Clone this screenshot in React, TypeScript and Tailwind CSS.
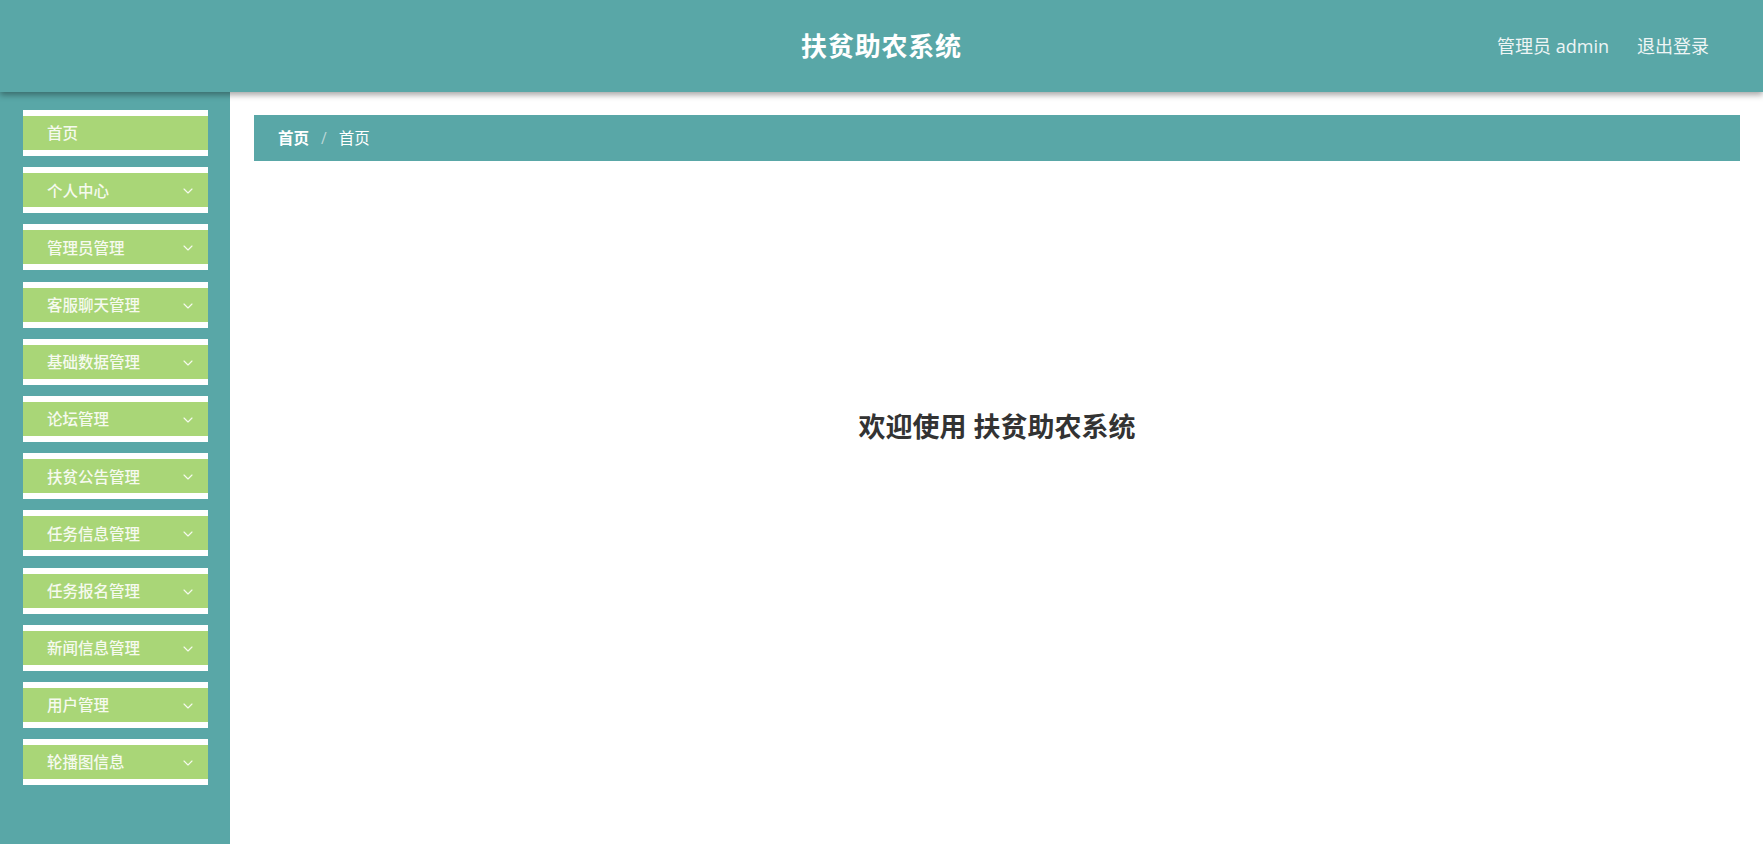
import { ChevronDown } from "lucide-react";

const menus = [
  { title: "首页", sub: false },
  { title: "个人中心", sub: true },
  { title: "管理员管理", sub: true },
  { title: "客服聊天管理", sub: true },
  { title: "基础数据管理", sub: true },
  { title: "论坛管理", sub: true },
  { title: "扶贫公告管理", sub: true },
  { title: "任务信息管理", sub: true },
  { title: "任务报名管理", sub: true },
  { title: "新闻信息管理", sub: true },
  { title: "用户管理", sub: true },
  { title: "轮播图信息", sub: true },
];

const font = { fontFamily: '"Open Sans", "Noto Sans CJK SC", sans-serif' };

export default function App() {
  return (
    <div className="min-h-screen flex flex-col bg-white" style={font}>
      <header className="relative z-10 h-[92px] bg-[#59a7a7] shadow-[0_3px_6px_rgba(0,0,0,0.35)] grid grid-cols-[1fr_auto_1fr] items-center">
        <div />
        <h1 className="text-[26px] font-bold text-white tracking-[0.8px]">扶贫助农系统</h1>
        <div className="flex justify-end items-center gap-[28px] pr-[54px] text-[18px] text-[#eef5f5]">
          <span>管理员 admin</span>
          <span className="cursor-pointer">退出登录</span>
        </div>
      </header>

      <div className="flex flex-1">
        <aside className="w-[230px] min-h-[752px] bg-[#59a7a7] pt-[18px] pl-[23px] flex flex-col gap-[11.2px]">
          {menus.map((m) => (
            <div
              key={m.title}
              className="w-[185px] h-[46px] border-y-[6px] border-white bg-[#a9d677] flex items-center justify-between pt-[2px] pl-[24px] pr-[12px] text-[15.5px] font-medium text-[#f6faef] cursor-pointer"
            >
              <span>{m.title}</span>
              {m.sub && <ChevronDown size={16} strokeWidth={1.7} className="text-[#f6faef]" />}
            </div>
          ))}
        </aside>

        <main className="flex-1 pt-[23px] pl-[24px] pr-[23px]">
          <div className="h-[46px] bg-[#59a7a7] flex items-center pt-[2px] pl-[24px] text-[15.5px] text-white">
            <span className="font-bold">首页</span>
            <span className="mx-[12px] text-[#b9d6d6]">/</span>
            <span>首页</span>
          </div>
          <div className="mt-[247px] text-center text-[27px] leading-[38px] font-bold text-[#333333]">
            欢迎使用 扶贫助农系统
          </div>
        </main>
      </div>
    </div>
  );
}
